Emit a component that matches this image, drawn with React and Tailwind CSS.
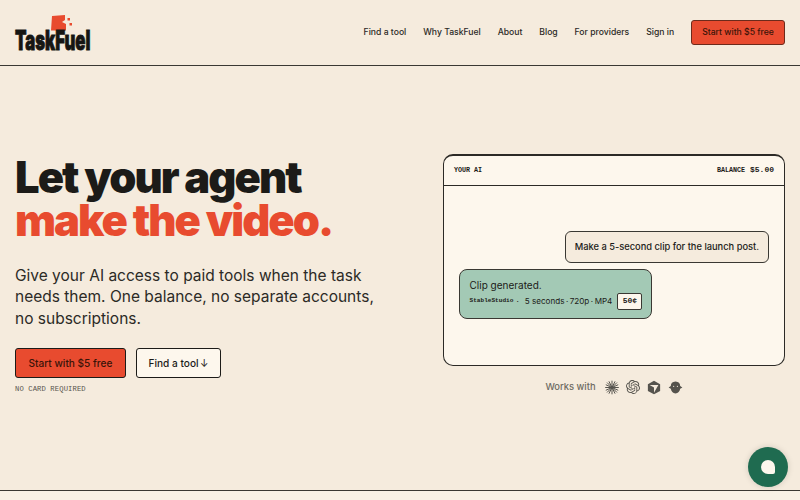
import React from 'react'
import { SiOpenai } from 'react-icons/si'

const navLinks = ['Find a tool', 'Why TaskFuel', 'About', 'Blog', 'For providers', 'Sign in']

const Logo = () => (
  <div className="flex flex-col w-[76px] h-[36px]">
    <svg width="24" height="16" viewBox="0 0 24 16" className="ml-[36px] shrink-0">
      <path d="M1 1 L14 0 L14 5 L11 7 L15 9 L15 15.5 L0 15.5 Z" fill="#e84b2f" />
      <rect x="16.5" y="3" width="2.5" height="2.5" fill="#e84b2f" />
      <rect x="18.5" y="8" width="2.5" height="2.5" fill="#e84b2f" />
    </svg>
    <span className="block w-[76px] origin-top-left scale-x-[0.62] whitespace-nowrap font-['Inter',sans-serif] text-[27px] leading-[20px] font-black text-[#161613] [-webkit-text-stroke:0.9px_#161613]">
      TaskFuel
    </span>
  </div>
)

const ClaudeMark = () => (
  <svg width="14" height="15" viewBox="0 0 24 24" stroke="#55534d" strokeWidth="1.7" strokeLinecap="round">
    <path d="M12 1V23M1 12H23M4 4L20 20M20 4L4 20M7 2L17 22M17 2L7 22M2 7.5L22 16.5M2 16.5L22 7.5" />
  </svg>
)

const CubeMark = () => (
  <svg width="14" height="15" viewBox="0 0 24 24" fill="#55534d">
    <path d="M12 0.5 L22.5 6.5 V18 L12 23.5 L1.5 18 V6.5 Z M4.5 7.5 L12 12 V21 L19.5 7.5 Z" fillRule="evenodd" />
  </svg>
)

const BotMark = () => (
  <svg width="15" height="15" viewBox="0 0 24 24" fill="#55534d">
    <path d="M12 2.5 C17 2.5 19.5 6 19.5 9.5 L23 12 L19.5 14 C19 18 16 21.5 12 21.5 C8 21.5 5 18 4.5 14 L1 12 L4.5 9.5 C4.5 6 7 2.5 12 2.5 Z" />
    <circle cx="9" cy="10" r="1" fill="#f5ebdd" />
    <circle cx="15" cy="10" r="1" fill="#f5ebdd" />
  </svg>
)

export default function App() {
  return (
    <div className="flex flex-col h-[500px] w-[800px] overflow-hidden bg-[#f5ebdd] font-['Inter',sans-serif] text-[#1c1b18]">
      {/* TOP */}
      <header className="flex h-[66px] shrink-0 items-center justify-between border-b border-[#3a3833] pl-[15px] pr-[15px]">
        <Logo />
        <nav className="flex items-center gap-[16.9px] text-[8.65px] font-medium text-[#2c2a26]">
          {navLinks.map((link) => (
            <a key={link}>{link}</a>
          ))}
          <a className="flex h-[25px] w-[94px] items-center justify-center rounded-[3px] border border-[#6d2a1b] bg-[#e84b2f] text-[#3a1409]">
            Start with $5 free
          </a>
        </nav>
      </header>

      {/* HERO */}
      <main className="flex flex-1 items-center justify-between pb-[8px] pl-[15px] pr-[15px]">
        <div className="mt-[2px] flex w-[400px] flex-col">
          <h1 className="text-[43.5px] leading-[43.5px] font-black tracking-[-0.045em]">
            <span className="block">Let your agent</span>
            <span className="block text-[#e84b2f]">make the video.</span>
          </h1>
          <p className="mt-[22px] w-[370px] text-[15.5px] leading-[21.5px] text-[#2c2a26]">
            Give your AI access to paid tools when the task needs them. One balance, no separate accounts, no subscriptions.
          </p>
          <div className="mt-[19px] flex gap-[10px] text-[10.1px] font-medium">
            <a className="flex h-[30px] w-[111px] items-center justify-center rounded-[3px] border-[1.5px] border-[#1c1b18] bg-[#e84b2f] text-[#3a1409]">
              Start with $5 free
            </a>
            <a className="flex h-[30px] w-[85px] items-center justify-center gap-[1.5px] rounded-[3px] border-[1.5px] border-[#1c1b18] bg-[#fdf7ed]">
              Find a tool<span className="font-normal">↓</span>
            </a>
          </div>
          <p className="mt-[6px] font-['Liberation_Mono',monospace] text-[7.2px] leading-[10px] tracking-[0.015em] text-[#55534d]">
            NO CARD REQUIRED
          </p>
        </div>

        <div className="flex w-[342px] flex-col items-center">
          <div className="flex h-[212px] w-full flex-col rounded-[10px] border border-t-2 border-[#2c2a26] bg-[#fdf7ed]">
            <div className="flex h-[30px] shrink-0 items-center justify-between border-b border-[#2c2a26] px-[10px] font-['Liberation_Mono',monospace] font-bold">
              <span className="text-[6.7px]">YOUR AI</span>
              <span className="flex items-center gap-[5px] text-[6.7px]">
                BALANCE <span className="text-[8px]">$5.00</span>
              </span>
            </div>
            <div className="flex flex-1 flex-col px-[15px] pt-[45px]">
              <div className="self-end rounded-[6px] border border-[#3a3833] bg-[#f5ebdd] px-[9px] py-[9px] text-[9.3px] leading-[12px] font-medium">
                Make a 5-second clip for the launch post.
              </div>
              <div className="mt-[6px] self-start rounded-[8px] border border-[#3a3833] bg-[#a3c9b5] pb-[8px] pl-[9.5px] pr-[9px] pt-[9px]">
                <p className="text-[10px] leading-[13px]">Clip generated.</p>
                <div className="mt-[1px] flex items-center gap-[3px] text-[8.1px]">
                  <span className="font-['Liberation_Mono',monospace] text-[6.1px] font-bold">StableStudio</span>
                  <span>·</span>
                  <span className="ml-[3px]">5 seconds{'\u2009'}·{'\u2009'}720p{'\u2009'}·{'\u2009'}MP4</span>
                  <span className="ml-[2px] flex h-[17px] w-[25px] items-center justify-center rounded-[2px] border border-[#3a3833] bg-[#fdf7ed] font-['Liberation_Mono',monospace] text-[8px] font-bold">
                    50¢
                  </span>
                </div>
              </div>
            </div>
          </div>
          <div className="mt-[14px] flex items-center gap-[7px] text-[#6d6a62]">
            <span className="mr-[2px] text-[9.4px] font-medium">Works with</span>
            <ClaudeMark />
            <SiOpenai size={14} className="text-[#55534d]" />
            <CubeMark />
            <BotMark />
          </div>
        </div>
      </main>

      {/* BOTTOM */}
      <footer className="h-[10px] shrink-0 border-t border-[#3a3833] bg-[#f8f1e5]" />

      <button className="absolute left-[748px] top-[447px] flex h-[40px] w-[40px] items-center justify-center rounded-full bg-[#1f6b50] shadow-[0_0_6px_rgba(0,0,0,0.15)]">
        <span className="block h-[14px] w-[14px] rounded-[50%_50%_2px_50%] bg-[#fdf7ed]" />
      </button>
    </div>
  )
}
